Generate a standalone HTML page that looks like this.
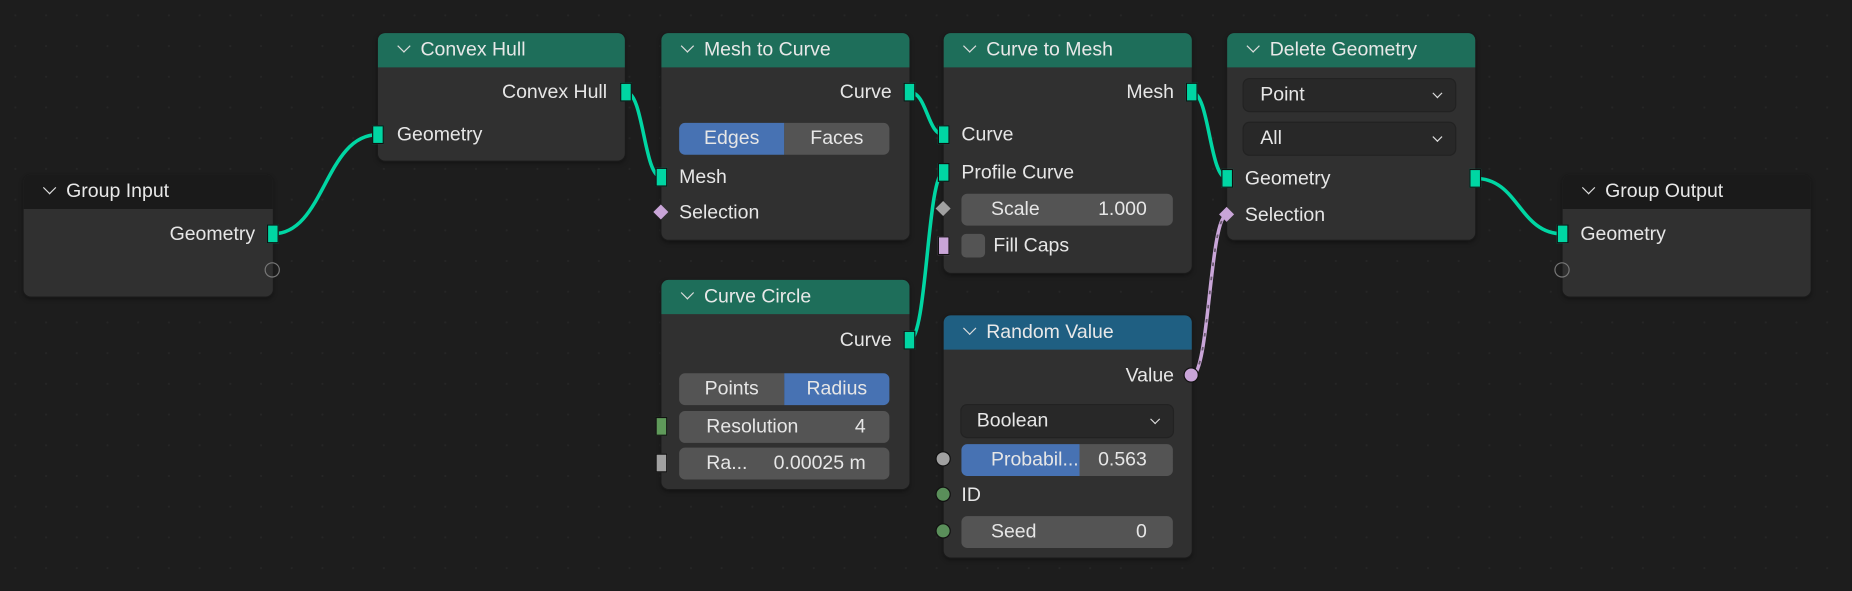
<!DOCTYPE html>
<html><head><meta charset="utf-8">
<style>
html,body{margin:0;padding:0;width:1852px;height:590px;overflow:hidden;background:#1d1d1d;}
#wrap{position:absolute;left:0;top:0;width:1568px;height:500px;transform:scale(1.18112);transform-origin:0 0;
 background-color:#1d1d1d;
 background-image:radial-gradient(circle,#262626 0.8px,transparent 1px);background-size:26px 26px;
 font-family:"Liberation Sans",sans-serif;font-size:16.5px;color:#e6e6e6;}
.node{position:absolute;background:#303030;border-radius:6px;box-shadow:0 0 0 1px #1a1a1a,0 2px 4px rgba(0,0,0,.4);}
.hd{height:29px;border-radius:6px 6px 0 0;line-height:29px;padding-left:16px;color:#e8e8e8;font-size:16.5px;}
.hd .chev{display:inline-block;width:7px;height:7px;border-right:1.5px solid #ddd;border-bottom:1.5px solid #ddd;transform:rotate(45deg);margin:0 10px 4px 2px;}
.g{background:#1e6e5a}.dk{background:#1a1a1a}.bl{background:#1f5f82}
.t{position:absolute;line-height:18px;white-space:nowrap;}
.r{text-align:right}
.sq{position:absolute;width:8px;height:14px;background:#00d6a3;border:1px solid #111;margin:-8px 0 0 -5px;}
.dia{position:absolute;width:9px;height:9px;background:#c9a5d8;transform:rotate(45deg);margin:-5px 0 0 -5px;}
.circ{position:absolute;width:11px;height:11px;border-radius:50%;margin:-7px 0 0 -7px;border:1px solid #111;}
.fld{position:absolute;height:27px;background:#545454;border-radius:5px;line-height:27px;color:#e6e6e6;white-space:nowrap;}
.dd{position:absolute;height:27px;background:#282828;border-radius:5px;line-height:27px;box-shadow:0 0 0 1px #222;}
.dd .ar{position:absolute;right:12px;top:9px;width:5px;height:5px;border-right:1.5px solid #ddd;border-bottom:1.5px solid #ddd;transform:rotate(45deg);}
</style></head><body>
<div id="wrap">
<svg width="1568" height="500" style="position:absolute;left:0;top:0">
<g fill="none" stroke="#00d6a3" stroke-width="3">
<path d="M231 198 C275 198 275 114 320 114"/>
<path d="M530 78 C545 78 545 150 560 150"/>
<path d="M770 78 C785 78 785 114 799 114"/>
<path d="M770 288 C785 288 785 146 799 146"/>
<path d="M1009 78 C1024 78 1024 151 1039 151"/>
<path d="M1249 151 C1286 151 1286 198 1323 198"/>
</g>
<path d="M1009 318 C1024 318 1024 182 1039 182" fill="none" stroke="#c9a5d8" stroke-width="3"/>
<path d="M1009 318 C1024 318 1024 182 1039 182" fill="none" stroke="#6a5a70" stroke-width="1.5" stroke-dasharray="3 9"/>
</svg>

<!-- Group Input -->
<div class="node" style="left:20px;top:148px;width:211px;height:103px">
<div class="hd dk"><span class="chev"></span>Group Input</div>
<div class="t r" style="right:15px;top:41px">Geometry</div>
</div>
<div class="sq" style="left:231px;top:198px"></div>
<div class="circ" style="left:231px;top:229px;background:transparent;border:1.5px solid #777"></div>

<!-- Convex Hull -->
<div class="node" style="left:320px;top:28px;width:209px;height:108px">
<div class="hd g"><span class="chev"></span>Convex Hull</div>
<div class="t r" style="right:15px;top:41px">Convex Hull</div>
<div class="t" style="left:16px;top:77px">Geometry</div>
</div>
<div class="sq" style="left:530px;top:78px"></div>
<div class="sq" style="left:320px;top:114px"></div>

<!-- Mesh to Curve -->
<div class="node" style="left:560px;top:28px;width:210px;height:175px">
<div class="hd g"><span class="chev"></span>Mesh to Curve</div>
<div class="t r" style="right:15px;top:41px">Curve</div>
<div class="fld" style="left:15px;top:76px;width:89px;background:#4772b3;border-radius:5px 0 0 5px;text-align:center">Edges</div>
<div class="fld" style="left:104px;top:76px;width:89px;border-radius:0 5px 5px 0;text-align:center">Faces</div>
<div class="t" style="left:15px;top:113px">Mesh</div>
<div class="t" style="left:15px;top:143px">Selection</div>
</div>
<div class="sq" style="left:770px;top:78px"></div>
<div class="sq" style="left:560px;top:150px"></div>
<div class="dia" style="left:560px;top:180px"></div>

<!-- Curve Circle -->
<div class="node" style="left:560px;top:237px;width:210px;height:177px">
<div class="hd g"><span class="chev"></span>Curve Circle</div>
<div class="t r" style="right:15px;top:42px">Curve</div>
<div class="fld" style="left:15px;top:79px;width:89px;border-radius:5px 0 0 5px;text-align:center">Points</div>
<div class="fld" style="left:104px;top:79px;width:89px;background:#4772b3;border-radius:0 5px 5px 0;text-align:center">Radius</div>
<div class="fld" style="left:15px;top:111px;width:178px"><span style="position:absolute;left:23px">Resolution</span><span style="position:absolute;right:20px">4</span></div>
<div class="fld" style="left:15px;top:142px;width:178px"><span style="position:absolute;left:23px">Ra...</span><span style="position:absolute;right:20px">0.00025 m</span></div>
</div>
<div class="sq" style="left:770px;top:288px"></div>
<div class="sq" style="left:560px;top:361px;background:#5f9a5a"></div>
<div class="sq" style="left:560px;top:392px;background:#a1a1a1"></div>

<!-- Curve to Mesh -->
<div class="node" style="left:799px;top:28px;width:210px;height:203px">
<div class="hd g"><span class="chev"></span>Curve to Mesh</div>
<div class="t r" style="right:15px;top:41px">Mesh</div>
<div class="t" style="left:15px;top:77px">Curve</div>
<div class="t" style="left:15px;top:109px">Profile Curve</div>
<div class="fld" style="left:15px;top:136px;width:179px"><span style="position:absolute;left:25px">Scale</span><span style="position:absolute;right:22px">1.000</span></div>
<div style="position:absolute;left:15px;top:170px;width:20px;height:20px;background:#545454;border-radius:4px"></div>
<div class="t" style="left:42px;top:171px">Fill Caps</div>
</div>
<div class="sq" style="left:1009px;top:78px"></div>
<div class="sq" style="left:799px;top:114px"></div>
<div class="sq" style="left:799px;top:146px"></div>
<div class="dia" style="left:799px;top:177px;background:#a1a1a1"></div>
<div class="sq" style="left:799px;top:208px;background:#c9a5d8"></div>

<!-- Random Value -->
<div class="node" style="left:799px;top:267px;width:210px;height:205px">
<div class="hd bl"><span class="chev"></span>Random Value</div>
<div class="t r" style="right:15px;top:42px">Value</div>
<div class="dd" style="left:15px;top:76px;width:179px"><span style="position:absolute;left:13px">Boolean</span><span class="ar"></span></div>
<div class="fld" style="left:15px;top:109px;width:179px;background:linear-gradient(to right,#4772b3 0,#4772b3 100px,#545454 100px)"><span style="position:absolute;left:25px">Probabil...</span><span style="position:absolute;right:22px">0.563</span></div>
<div class="t" style="left:15px;top:143px">ID</div>
<div class="fld" style="left:15px;top:170px;width:179px"><span style="position:absolute;left:25px">Seed</span><span style="position:absolute;right:22px">0</span></div>
</div>
<div class="circ" style="left:1009px;top:318px;background:#c9a5d8"></div>
<div class="circ" style="left:799px;top:389px;background:#a1a1a1"></div>
<div class="circ" style="left:799px;top:419px;background:#5a8f5a"></div>
<div class="circ" style="left:799px;top:450px;background:#5a8f5a"></div>

<!-- Delete Geometry -->
<div class="node" style="left:1039px;top:28px;width:210px;height:175px">
<div class="hd g"><span class="chev"></span>Delete Geometry</div>
<div class="dd" style="left:14px;top:39px;width:179px"><span style="position:absolute;left:14px">Point</span><span class="ar"></span></div>
<div class="dd" style="left:14px;top:76px;width:179px"><span style="position:absolute;left:14px">All</span><span class="ar"></span></div>
<div class="t" style="left:15px;top:114px">Geometry</div>
<div class="t" style="left:15px;top:145px">Selection</div>
</div>
<div class="sq" style="left:1039px;top:151px"></div>
<div class="sq" style="left:1249px;top:151px"></div>
<div class="dia" style="left:1039px;top:182px"></div>

<!-- Group Output -->
<div class="node" style="left:1323px;top:148px;width:210px;height:103px">
<div class="hd dk"><span class="chev"></span>Group Output</div>
<div class="t" style="left:15px;top:41px">Geometry</div>
</div>
<div class="sq" style="left:1323px;top:198px"></div>
<div class="circ" style="left:1323px;top:229px;background:transparent;border:1.5px solid #777"></div>
</div>
</body></html>
